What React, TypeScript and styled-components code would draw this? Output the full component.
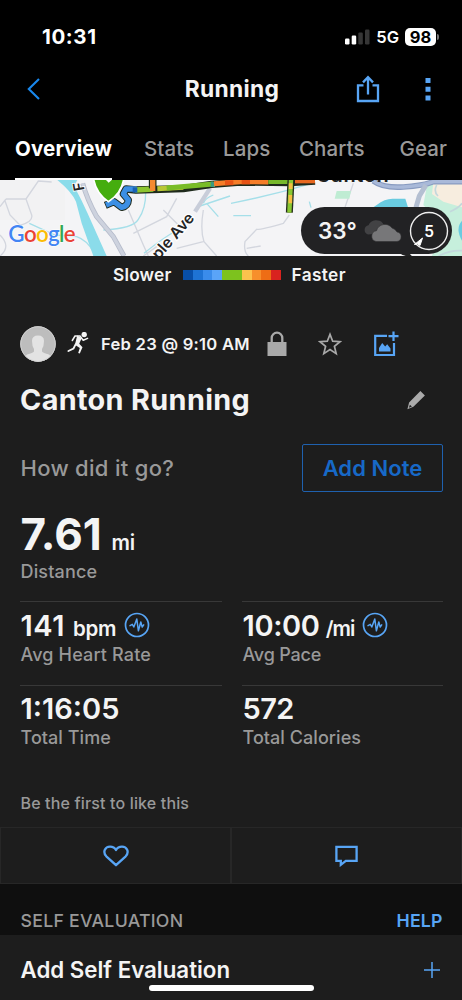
import React from "react";
import styled, { createGlobalStyle } from "styled-components";

const Global = createGlobalStyle`
  * { box-sizing: border-box; }
  html, body { margin: 0; padding: 0; background: #1d1d1d; }
  body { font-family: Inter, "Liberation Sans", sans-serif; -webkit-font-smoothing: antialiased; }
  button { font: inherit; background: none; border: 0; padding: 0; color: inherit; }
  svg { display: block; flex: none; }
`;

const BLUE = "#58a5f5";

const Screen = styled.main`
  width: 462px;
  height: 1000px;
  overflow: hidden;
  position: relative;
  background: #1d1d1d;
  color: #f4f4f4;
  display: flex;
  flex-direction: column;
`;

const Label = styled.span<{ $size: number; $weight?: number; $track?: number; $color?: string }>`
  font-size: ${(p) => p.$size}px;
  font-weight: ${(p) => p.$weight ?? 600};
  letter-spacing: ${(p) => p.$track ?? 0}px;
  color: ${(p) => p.$color ?? "#f4f4f4"};
  line-height: 1.2;
  white-space: nowrap;
`;

const Header = styled.header`
  height: 180px;
  flex: none;
  background: #000;
`;

const StatusBar = styled.div`
  height: 63px;
  padding: 12px 23px 0 42px;
  display: flex;
  align-items: center;
  justify-content: space-between;
`;

const StatusIcons = styled.div`
  display: flex;
  align-items: center;
  gap: 6px;
`;

const Battery = styled.div`
  width: 31px;
  height: 18px;
  border-radius: 5px;
  background: #fff;
  display: flex;
  align-items: center;
  justify-content: center;
`;

const BatteryTip = styled.div`
  width: 2px;
  height: 6px;
  margin-left: -5px;
  border-radius: 0 2px 2px 0;
  background: #777;
`;

const TitleBar = styled.div`
  height: 52px;
  display: grid;
  grid-template-columns: 1fr auto 1fr;
  align-items: center;
  padding: 0 31px 0 27px;
`;

const PageTitle = styled.div`
  padding-left: 6px;
`;

const TitleActions = styled.div`
  display: flex;
  align-items: center;
  justify-content: flex-end;
  gap: 45px;
`;

const Tabs = styled.nav`
  height: 65px;
  padding-left: 15px;
  display: flex;
`;

const Tab = styled.button<{ $active?: boolean; $gap: number; $width: number }>`
  height: 65px;
  width: ${(p) => p.$width}px;
  margin-right: ${(p) => p.$gap}px;
  padding: 4.5px 0 0;
  text-align: left;
  border-bottom: 2px solid ${(p) => (p.$active ? "#fff" : "transparent")};
  color: ${(p) => (p.$active ? "#fff" : "#999")};
  font-size: 20.5px;
  font-weight: ${(p) => (p.$active ? 700 : 500)};
  letter-spacing: ${(p) => (p.$active ? 0.15 : 0.08)}px;
  white-space: nowrap;
`;

const MapPanel = styled.section`
  height: 76px;
  flex: none;
  position: relative;
`;

const WeatherPill = styled.div`
  position: absolute;
  right: 10px;
  top: 27px;
  width: 151px;
  height: 47px;
  padding: 0 3px 0 17px;
  border-radius: 24px;
  background: #222224;
  display: flex;
  align-items: center;
  justify-content: space-between;
`;

const Legend = styled.div`
  height: 38px;
  flex: none;
  padding-left: 113px;
  display: flex;
  align-items: center;
`;

const Scale = styled.div`
  display: flex;
  width: 98px;
  height: 10px;
  margin: 0 10.5px 0 auto;
`;

const LegendStart = styled.div`
  display: flex;
  align-items: center;
  width: 178.5px;
`;

const Swatch = styled.i<{ $color: string }>`
  flex: 1;
  background: ${(p) => p.$color};
`;

const MetaRow = styled.div`
  height: 36px;
  flex: none;
  margin-top: 32px;
  padding: 0 63px 0 20px;
  display: flex;
  align-items: center;
`;

const ActivityDate = styled.div`
  width: 156px;
  margin-left: 12px;
  padding-top: 1px;
  display: flex;
`;

const MetaIcons = styled.div`
  flex: 1;
  display: flex;
  justify-content: space-between;
  align-items: center;
  margin-left: 10px;
`;

const TitleRow = styled.div`
  height: 40px;
  flex: none;
  margin-top: 18px;
  padding: 0 37px 0 20px;
  display: flex;
  align-items: center;
  justify-content: space-between;
`;

const NoteRow = styled.div`
  height: 48px;
  flex: none;
  margin-top: 24px;
  padding: 0 19px 0 20.5px;
  display: flex;
  align-items: center;
  justify-content: space-between;
`;

const NoteButton = styled.button`
  width: 141px;
  height: 48px;
  border: 1px solid #1f61ae;
  border-radius: 2px;
`;

const Distance = styled.div`
  height: 109px;
  flex: none;
  padding: 15.5px 0 0 20.5px;
`;

const Stats = styled.div`
  display: grid;
  flex: none;
  grid-template-columns: 202px 201px;
  grid-auto-rows: 83.5px;
  column-gap: 20px;
  padding-left: 20px;
  height: 167px;
`;

const Stat = styled.div`
  border-top: 1px solid #383838;
  padding: 6.5px 0 0 0.5px;
`;

const ValueLine = styled.div<{ $height: number }>`
  height: ${(p) => p.$height}px;
  display: flex;
  align-items: baseline;
  svg { align-self: center; margin: -2px 0 0 7.5px; }
`;

const Unit = styled(Label)<{ $gap: number }>`
  margin-left: ${(p) => p.$gap}px;
`;

const Caption = styled.div<{ $track?: number }>`
  font-size: 18px;
  line-height: 22px;
  font-weight: 500;
  letter-spacing: ${(p) => p.$track ?? 0}px;
  color: #999;
`;

const Likes = styled.div`
  height: 59px;
  flex: none;
  padding: 25px 0 0 20.5px;
`;

const Actions = styled.div`
  display: grid;
  flex: none;
  grid-template-columns: 1fr 1fr;
  height: 57px;
`;

const Action = styled.button`
  border: 1px solid #272727;
  display: flex;
  align-items: center;
  justify-content: center;
`;

const SectionHead = styled.div`
  height: 51px;
  flex: none;
  padding: 25.5px 19.5px 0 20.5px;
  background: #0f0f0f;
  display: flex;
  align-items: flex-start;
  justify-content: space-between;
`;

const EvalRow = styled.div`
  height: 65px;
  flex: none;
  padding: 5px 21px 0 20.5px;
  display: flex;
  align-items: center;
  justify-content: space-between;
`;

const HomeIndicator = styled.div`
  position: absolute;
  left: 149px;
  bottom: 9px;
  width: 165px;
  height: 6px;
  border-radius: 3px;
  background: #fff;
`;

const RouteMap = () => (
  <svg width="462" height="76" viewBox="0 180 1386 228" preserveAspectRatio="none" fill="none">
    <rect y="180" width="1386" height="228" fill="#f4f4f6" />
    <path d="M0 180H195V300H0Z" fill="#f2f2f3" />
    <g stroke="#d3d6de" strokeWidth="4">
      <path d="M18 237H78L115 183L155 186M18 237L0 260M14 240L30 285L60 316Q100 305 95 285L78 237M0 345Q35 380 0 408" />
      <path d="M385 270L430 375L445 408M400 340L500 290L530 235M490 270L545 325M610 270Q600 330 612 365L650 408M530 385L610 365M430 408L470 380" />
      <path d="M868 285L850 310Q780 330 770 328L735 365Q730 395 745 408M740 385L782 378M1060 190L1035 262" />
    </g>
    <g stroke="#a5dfe9" strokeWidth="4">
      <path d="M88 310L165 345L230 350Q260 360 280 395M310 330Q400 325 415 298Q438 265 437 215M432 400Q500 345 535 330M600 258L690 228M620 250L655 290M640 225Q615 235 610 250" />
      <path d="M693 250Q820 225 935 190M700 287H753M928 245L933 263" />
    </g>
    <path d="M172 180H232L222 198Q245 240 262 278L320 408H280L245 310L228 245Q215 215 172 180Z" fill="#8bdcea" />
    <path d="M248 190Q262 240 290 290L340 350L372 408" stroke="#b6bccb" strokeWidth="15" />
    <path d="M248 190Q262 240 290 290L340 350L372 408" stroke="#cdd2de" strokeWidth="10" />
    <path d="M630 205L585 275" stroke="#c8cdd9" strokeWidth="13" />
    <path d="M1010 213H1053L1048 236H1004Z" fill="#bfecd3" />
    <path d="M1130 255Q1155 235 1180 236H1216L1224 262H1120Z" fill="#69cbe0" />
    <path d="M1282 190H1386V408H1295L1340 330L1270 255Z" fill="#c6efdc" />
    <path d="M1300 188H1386V262L1330 245L1296 222Z" fill="#f7eddf" />
    <path d="M1386 302Q1365 325 1386 362" fill="#69cbe0" />
    <path d="M1350 275Q1375 265 1386 250M1316 408Q1350 390 1386 392M1310 195Q1300 215 1314 228" stroke="#c3d8dc" strokeWidth="5" />
    <path d="M1120 183Q1150 205 1210 201T1300 185H1386" stroke="#889bc0" strokeWidth="17" />
    <path d="M1120 183Q1150 205 1210 201T1300 185H1386" stroke="#a9b9d9" strokeWidth="10" />
    <path d="M1278 195L1258 228L1248 262" stroke="#b4bfd2" strokeWidth="15" />
    <text x="231" y="191" fontSize="44" fontWeight="600" fill="#252525" stroke="#fff" strokeWidth="5" paintOrder="stroke" transform="rotate(-100 250 191)">F</text>

    <g strokeLinejoin="round">
      <path d="M316 256L342 245L365 262Q384 258 385 240L370 222L378 207L408 210L550 206L635 193L720 186L870 188L945 183" stroke="#1f2a1c" strokeWidth="22" />
      <path d="M318 255L342 245L365 262Q384 258 385 240L370 222L378 207H410" stroke="#3c8fe4" strokeWidth="16" />
      <path d="M405 210L460 207" stroke="#8cc530" strokeWidth="16" />
      <path d="M398 210H412" stroke="#1861b5" strokeWidth="16" />
      <path d="M458 180V205" stroke="#1f2a1c" strokeWidth="23" />
      <path d="M458 180V213" stroke="#f58a32" strokeWidth="16" />
      <path d="M472 206L550 202" stroke="#b8c735" strokeWidth="15" />
      <path d="M500 204L640 192" stroke="#79bc27" strokeWidth="15" />
      <path d="M632 193H645" stroke="#3b9980" strokeWidth="16" />
      <path d="M642 191L720 185L805 186" stroke="#f57d29" strokeWidth="15" />
      <path d="M675 188H700M725 185H750" stroke="#e75316" strokeWidth="15" />
      <path d="M805 185H872" stroke="#76b82a" strokeWidth="14" />
      <path d="M885 185H945" stroke="#e86820" strokeWidth="10" />
    </g>
    <path d="M873 180L868 278" stroke="#242b1d" strokeWidth="21" />
    <path d="M873 180L868 278" stroke="#89c832" strokeWidth="13" />
    <path d="M872 190V207M871 225V250" stroke="#f6be43" strokeWidth="11" />
    <path d="M280 172Q286 218 325 245Q366 220 372 172Z" fill="#45ad0e" stroke="#fff" strokeWidth="5" />
    <path d="M312 174L326 188L342 174Z" fill="#fff" />
    <text x="948" y="187" fontSize="60" fontWeight="600" fill="#202020" textLength="218">Canton</text>
    <text x="476" y="421" fontSize="47" fontWeight="600" fill="#252525" stroke="#fff" strokeWidth="7" paintOrder="stroke" transform="rotate(-49 476 421)">ple Ave</text>
    <path d="M1205 401H1225L1232 408H1225Z" fill="#222" stroke="#222" strokeWidth="5" />
    <g fontFamily="Lato, sans-serif" fontSize="67" fontWeight="600" stroke="#fff" strokeWidth="3" paintOrder="stroke">
      <text x="25" y="366" textLength="202">
        <tspan fill="#4285f4">G</tspan><tspan fill="#ea4335">o</tspan><tspan fill="#fbbc05">o</tspan><tspan fill="#4285f4">g</tspan><tspan fill="#34a853">l</tspan><tspan fill="#ea4335">e</tspan>
      </text>
    </g>
  </svg>
);

const Pulse = () => (
  <svg width="26" height="26" viewBox="0 0 26 26" fill="none" stroke={BLUE} strokeLinejoin="round" strokeLinecap="round">
    <circle cx="13" cy="13" r="11.5" strokeWidth="1.7" />
    <path d="M6 13.6L8.3 12.4L9.8 15L12.8 7L14.4 18.8L16.8 10L18.2 15L19.7 12.8" strokeWidth="1.5" />
  </svg>
);

const Cloud = () => (
  <svg width="39" height="22" viewBox="0 0 39 22">
    <path d="M5 14.5A4.8 4.8 0 0 1 5.5 5.2A8.5 8.5 0 0 1 20 3.5L22 13Z" fill="#424244" />
    <path d="M13 21.5A5.5 5.5 0 0 1 13.5 10.7A8.8 8.8 0 0 1 29 8A8 8 0 0 1 34 12A4.8 4.8 0 0 1 34 21.5Z" fill="#777779" stroke="#303032" strokeWidth=".6" />
  </svg>
);

const tabs = [
  { name: "Overview", width: 97, gap: 32 },
  { name: "Stats", width: 51, gap: 28 },
  { name: "Laps", width: 47, gap: 29 },
  { name: "Charts", width: 66, gap: 34.5 },
  { name: "Gear", width: 50, gap: 0 },
];
const scale = ["#084fa8", "#1e73d4", "#3a8ceb", "#5aa4f8", "#7dc21e", "#7dc21e", "#fcc24d", "#f78f2b", "#ee6d15", "#d9231f"];
const stats = [
  { value: "141", unit: "bpm", unitTrack: -0.3, gap: 8, caption: "Avg Heart Rate", track: 0.5, captionTrack: 0.15 },
  { value: "10:00", unit: "/mi", unitTrack: -0.9, gap: 6, caption: "Avg Pace", track: -0.35, captionTrack: -0.2 },
  { value: "1:16:05", caption: "Total Time", track: 0, captionTrack: 0.05 },
  { value: "572", caption: "Total Calories", track: -0.6, captionTrack: 0.05 },
];

export default function App() {
  return (
    <Screen>
      <Global />
      <Header>
        <StatusBar>
          <Label $size={20.5} $weight={700} $track={0.6} $color="#fff">10:31</Label>
          <StatusIcons>
            <svg width="25" height="16" viewBox="0 0 25 16">
              <rect x="0" y="9.5" width="4.5" height="6" rx="1.2" fill="#fff" />
              <rect x="6.7" y="6.5" width="4.5" height="9" rx="1.2" fill="#fff" />
              <rect x="13.3" y="3.5" width="4.5" height="12" rx="1.2" fill="#363636" />
              <rect x="20" y=".5" width="4.5" height="15" rx="1.2" fill="#363636" />
            </svg>
            <Label $size={16.5} $color="#fff">5G</Label>
            <Battery><Label $size={16.5} $weight={700} $color="#000">98</Label></Battery>
            <BatteryTip />
          </StatusIcons>
        </StatusBar>
        <TitleBar>
          <svg width="13" height="22" viewBox="0 0 13 22" fill="none" stroke="#1988ed" strokeWidth="2.1">
            <path d="M12 1L1.8 11L12 21" />
          </svg>
          <PageTitle><Label $size={22.8} $weight={700} $track={0.3}>Running</Label></PageTitle>
          <TitleActions>
            <svg width="24" height="28" viewBox="0 0 24 28" fill="none" stroke={BLUE} strokeWidth="2.3">
              <path d="M7.5 10.4H2V26H22V10.4H16.5M12 19.5V2.3M7 7.4L12 2.2L17 7.4" />
            </svg>
            <svg width="6" height="24" viewBox="0 0 6 24" fill={BLUE}>
              <path d="M.5 1H5.5V6H.5ZM.5 9.8H5.5V14.8H.5ZM.5 18.5H5.5V23.5H.5Z" />
            </svg>
          </TitleActions>
        </TitleBar>
        <Tabs>
          {tabs.map((t, i) => (
            <Tab key={t.name} $active={i === 0} $width={t.width} $gap={t.gap}>{t.name}</Tab>
          ))}
        </Tabs>
      </Header>

      <MapPanel>
        <RouteMap />
        <WeatherPill>
          <Label $size={22.5}>33°</Label>
          <Cloud />
          <svg width="40" height="40" viewBox="0 0 40 40">
            <circle cx="20" cy="20" r="18.5" fill="none" stroke="#eee" strokeWidth="1.4" />
            <path d="M5.5 33.5L13.5 27L11 34.5L8.5 32.8Z" fill="#fff" stroke="#fff" strokeWidth="1" />
            <text x="20.2" y="25.5" textAnchor="middle" fontSize="15.5" fontWeight="600" fill="#fff">5</text>
          </svg>
        </WeatherPill>
      </MapPanel>
      <Legend>
        <LegendStart>
          <Label $size={17.3} $track={0.2}>Slower</Label>
          <Scale>{scale.map((c, i) => <Swatch key={i} $color={c} />)}</Scale>
        </LegendStart>
        <Label $size={17.3} $track={0.35}>Faster</Label>
      </Legend>

      <MetaRow>
        <svg width="36" height="36" viewBox="0 0 36 36">
          <clipPath id="face"><circle cx="18" cy="18" r="17.7" /></clipPath>
          <g clipPath="url(#face)">
            <rect width="36" height="36" fill="#bdbdbd" />
            <path d="M12 15Q12 9.5 18 9.5T24 15Q24 20 22 23V25.5Q23 27 29 28.5L36 36H0L7 28.5Q13 27 14 25.5V23Q12 20 12 15Z" fill="#e3e3e3" />
          </g>
          <circle cx="18" cy="18" r="17.3" fill="none" stroke="#d2d2d2" />
        </svg>
        <svg width="33" height="24" viewBox="-12 1.2 33 24">
          <circle cx="16.2" cy="3.8" r="2.7" fill="#f4f4f4" />
          <path d="M4.3 9.7L7 5.2L12 5.2L15.2 9.5L19.6 7.6" fill="none" stroke="#f4f4f4" strokeWidth="1.5" strokeLinejoin="round" strokeLinecap="round" />
          <path d="M9.2 4.8L13.8 7.3L11.2 13L14.5 16.5L11.8 22.8L10.2 22.2L11.8 17.2L6.9 14Z" fill="#f4f4f4" />
          <path d="M7.6 13.5L5.5 17.7L.4 20.2" fill="none" stroke="#f4f4f4" strokeWidth="1.8" strokeLinecap="round" />
        </svg>
        <ActivityDate><Label $size={16.6} $track={0.25}>Feb 23 @ 9:10 AM</Label></ActivityDate>
        <MetaIcons>
          <svg width="20" height="26" viewBox="0 0 20 26">
            <path d="M.5 11H19.5V25H.5Z" fill="#a9a9a9" />
            <path d="M4.7 12V7A5.3 5.3 0 0 1 15.3 7V12" fill="none" stroke="#a9a9a9" strokeWidth="2.3" />
          </svg>
          <svg width="24" height="24" viewBox="0 0 24 24" fill="none" stroke="#a9a9a9" strokeWidth="1.7">
            <path d="M12 2.4L14.7 9.2L22 9.7L16.4 14.3L18.2 21.6L12 17.6L5.8 21.6L7.6 14.3L2 9.7L9.3 9.2Z" />
          </svg>
          <svg width="26" height="26" viewBox="0 0 26 26">
            <path d="M14 4.8H2.2V24H21V12M20.5 .5V10M15.5 5.2H25.5" fill="none" stroke={BLUE} strokeWidth="2.2" />
            <path d="M6 20.5V17L9.2 12L12.2 15.4L14.2 13.3L17.5 17.5V20.5Z" fill={BLUE} />
          </svg>
        </MetaIcons>
      </MetaRow>
      <TitleRow>
        <Label $size={28.8} $weight={700} $track={0.35}>Canton Running</Label>
        <svg width="18" height="19" viewBox="0 0 18 19" fill="#aaa">
          <path d="M13.4 0L17.9 4.4L6.4 15.8L.4 18.2L2.1 11.6ZM2.9 13.8L1.9 16.8L4.9 15.6Z" fillRule="evenodd" />
        </svg>
      </TitleRow>
      <NoteRow>
        <Label $size={22} $weight={500} $track={0.3} $color="#999">How did it go?</Label>
        <NoteButton><Label $size={22} $track={0.05} $color="#1769c7">Add Note</Label></NoteButton>
      </NoteRow>

      <Distance>
        <ValueLine $height={53}>
          <Label $size={44} $weight={700} $track={0.1}>7.61</Label>
          <Unit $size={20.5} $gap={9.5} $track={-0.2}>mi</Unit>
        </ValueLine>
        <Caption $track={0.15}>Distance</Caption>
      </Distance>
      <Stats>
        {stats.map((s) => (
          <Stat key={s.caption}>
            <ValueLine $height={35}>
              <Label $size={29} $track={s.track}>{s.value}</Label>
              {s.unit && <Unit $size={20.5} $gap={s.gap ?? 8} $track={s.unitTrack}>{s.unit}</Unit>}
              {s.unit && <Pulse />}
            </ValueLine>
            <Caption $track={s.captionTrack}>{s.caption}</Caption>
          </Stat>
        ))}
      </Stats>

      <Likes><Label $size={16} $weight={500} $track={0.15} $color="#999">Be the first to like this</Label></Likes>
      <Actions>
        <Action>
          <svg width="26" height="22" viewBox="0 0 26 22" fill="none" stroke={BLUE} strokeWidth="2.3" strokeLinejoin="round">
            <path d="M13 20.2L3.3 11.3C-.7 6.8 2.2 1.6 7 1.6C10 1.6 12 3.1 13 5C14 3.1 16 1.6 19 1.6C23.8 1.6 26.7 6.8 22.7 11.3Z" />
          </svg>
        </Action>
        <Action>
          <svg width="23" height="22" viewBox="0 0 23 22" fill="none" stroke={BLUE} strokeWidth="2.3">
            <path d="M1.4 1.8H21.6V15.9H10.8L5.8 19.8V15.9H1.4Z" />
          </svg>
        </Action>
      </Actions>
      <SectionHead>
        <Label $size={17.7} $weight={500} $track={0.27} $color="#999">SELF EVALUATION</Label>
        <Label $size={17.7} $track={0.15} $color={BLUE}>HELP</Label>
      </SectionHead>
      <EvalRow>
        <Label $size={22.3} $track={0}>Add Self Evaluation</Label>
        <svg width="18" height="18" viewBox="0 0 18 18" stroke={BLUE} strokeWidth="1.5">
          <path d="M9 1V17M1 9H17" />
        </svg>
      </EvalRow>
      <HomeIndicator />
    </Screen>
  );
}
